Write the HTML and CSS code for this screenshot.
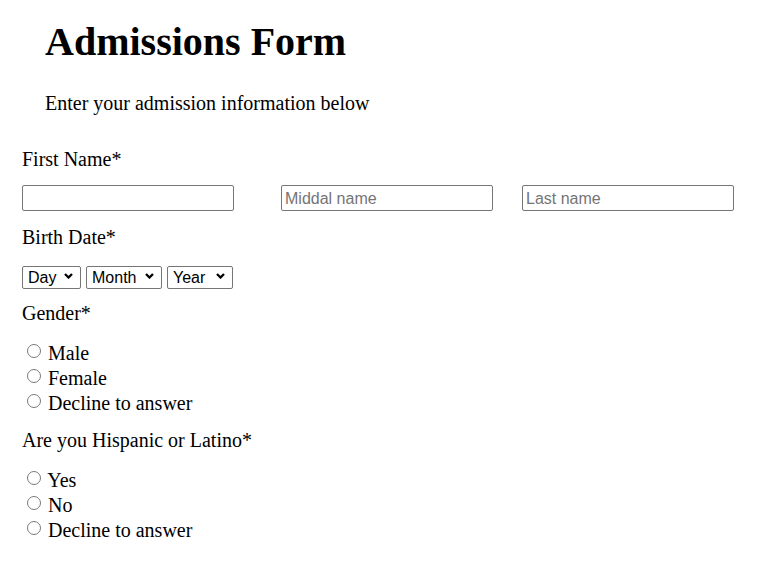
FILE: index.html
```html
<!DOCTYPE html>
<html lang="en">
<head>
<meta charset="utf-8">
<title>Admissions Form</title>
<link rel="stylesheet" href="styles.css">
</head>
<body>
<header class="header">
  <h1 class="title">Admissions Form</h1>
  <p class="intro">Enter your admission information below</p>
</header>
<form class="form">
  <p class="field-label label-first">First Name*</p>
  <div class="name-row">
    <input class="text-input" type="text">
    <input class="text-input" type="text" placeholder="Middal name">
    <input class="text-input" type="text" placeholder="Last name">
  </div>
  <p class="field-label label-birth">Birth Date*</p>
  <div class="date-row">
    <span class="select-wrap">
      <select class="date-select select-day">
        <option>Day</option><option>1</option><option>2</option><option>31</option>
      </select>
      <svg class="chevron" viewBox="0 0 9 6" width="9" height="6" aria-hidden="true"><path d="M1 1 L4.5 4.5 L8 1"/></svg>
    </span>
    <span class="select-wrap">
      <select class="date-select select-month">
        <option>Month</option><option>1</option><option>12</option>
      </select>
      <svg class="chevron" viewBox="0 0 9 6" width="9" height="6" aria-hidden="true"><path d="M1 1 L4.5 4.5 L8 1"/></svg>
    </span>
    <span class="select-wrap">
      <select class="date-select select-year">
        <option>Year</option><option>2000</option><option>2001</option>
      </select>
      <svg class="chevron" viewBox="0 0 9 6" width="9" height="6" aria-hidden="true"><path d="M1 1 L4.5 4.5 L8 1"/></svg>
    </span>
  </div>
  <p class="field-label label-gender">Gender*</p>
  <div class="options">
    <div class="option"><input class="radio" type="radio" name="gender"> Male</div>
    <div class="option"><input class="radio" type="radio" name="gender"> Female</div>
    <div class="option"><input class="radio" type="radio" name="gender"> Decline to answer</div>
  </div>
  <p class="field-label label-hispanic">Are you Hispanic or Latino*</p>
  <div class="options">
    <div class="option"><input class="radio" type="radio" name="hispanic"> Yes</div>
    <div class="option"><input class="radio" type="radio" name="hispanic"> No</div>
    <div class="option"><input class="radio" type="radio" name="hispanic"> Decline to answer</div>
  </div>
</form>
</body>
</html>
```
FILE: styles.css
```css
html, body {
  background: #ffffff;
}

body {
  margin: 0;
  padding: 20px 22px 0;
  font-family: "Liberation Serif", "Times New Roman", serif;
  font-size: 20px;
  line-height: 23px;
  color: #000000;
}

.header {
  padding-left: 23px;
}

.title {
  margin: 0;
  font-size: 40px;
  line-height: 44px;
  font-weight: bold;
}

.intro {
  margin: 28px 0 0;
}

.form {
  margin: 0;
}

.field-label {
  margin: 0;
}

.label-first {
  margin-top: 33px;
}

.name-row {
  display: grid;
  grid-template-columns: 259px 241px 212px;
  margin-top: 14px;
}

.text-input {
  box-sizing: border-box;
  width: 212px;
  height: 26px;
  margin: 0;
  padding: 2px 3px 1px;
  border: 1px solid #767676;
  border-radius: 2px;
  font-family: "Liberation Sans", Arial, sans-serif;
  font-size: 16px;
  color: #000;
  background: #fff;
}

.text-input::placeholder {
  color: #757575;
}

.label-birth {
  margin-top: 15px;
}

.date-row {
  display: flex;
  gap: 5px;
  margin-top: 16px;
}

.select-wrap {
  position: relative;
  display: block;
  height: 23px;
}

.date-select {
  -webkit-appearance: none;
  appearance: none;
  box-sizing: border-box;
  height: 23px;
  margin: 0;
  padding: 0 0 0 5px;
  border: 1px solid #767676;
  border-radius: 2px;
  background: #fff;
  font-family: "Liberation Sans", Arial, sans-serif;
  font-size: 16px;
  line-height: 21px;
  color: #000;
}

.select-day {
  width: 59px;
}

.select-month {
  width: 76px;
}

.select-year {
  width: 66px;
}

.chevron {
  position: absolute;
  right: 8px;
  top: 8px;
  fill: none;
  stroke: #000;
  stroke-width: 2.3;
  pointer-events: none;
}

.label-gender {
  margin-top: 14px;
}

.options {
  margin-top: 16px;
}

.option {
  line-height: 25px;
}

.radio {
  -webkit-appearance: none;
  appearance: none;
  box-sizing: border-box;
  width: 14px;
  height: 14px;
  margin: 0 2px 2px 5px;
  border: 1px solid #7a7a7a;
  border-radius: 50%;
  background: #fff;
  vertical-align: baseline;
}

.label-hispanic {
  margin-top: 13px;
}
```
